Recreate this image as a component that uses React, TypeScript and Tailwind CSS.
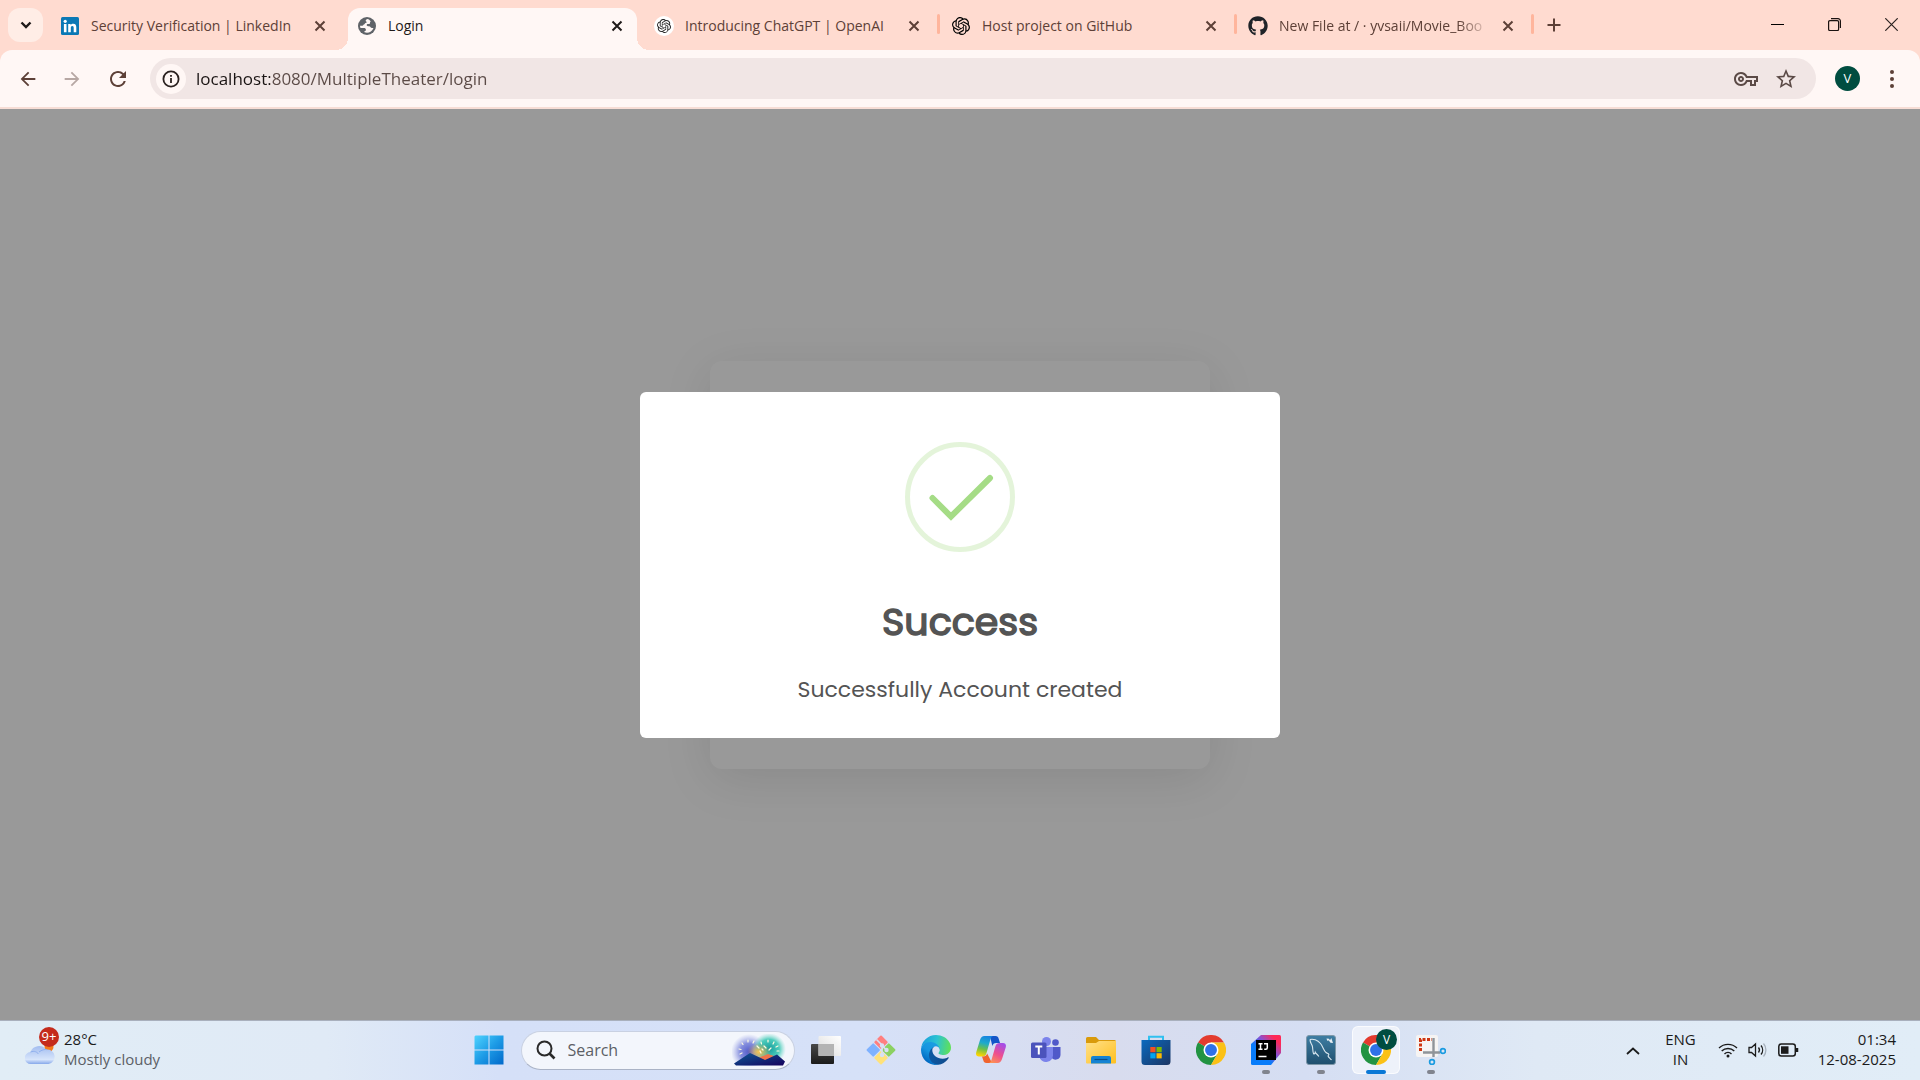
import type { ReactNode } from "react";
import { SiOpenai } from "react-icons/si";
import { FaGithub } from "react-icons/fa";
import { MdArrowBack, MdArrowForward, MdRefresh, MdOutlineVpnKey, MdStarBorder } from "react-icons/md";

/* ---------- Browser icons ---------- */

function LinkedInIcon() {
  return (
    <svg viewBox="0 0 18 18" className="size-[18px]">
      <rect width="18" height="18" rx="1.5" fill="#0a78b5" />
      <circle cx="4.2" cy="4.3" r="1.6" fill="#fff" />
      <path d="M2.9 7h2.6v8.2H2.9zM7.2 7h2.5v1.2c.5-.9 1.4-1.4 2.6-1.4 2.3 0 3 1.5 3 3.7v4.7h-2.6V11c0-1.200-.3-2.100-1.400-2.100-1.100 0-1.500.8-1.500 2.100v4.200H7.200z" fill="#fff" />
    </svg>
  );
}

function GlobeIcon() {
  return (
    <svg viewBox="0 0 18 18" className="size-[18px]">
      <circle cx="9" cy="9" r="9" fill="#5f6368" />
      <path d="M9.500 2c-1.800.7-2.400 1.800-1.300 2.500 1 .6.500 1.400-.6 1.500-1 .1-.6 1.300-1.700 1.400-.9.1-.4 1.200-1.600 1.300l-2.300.1c.1 1 .2 1.500.5 2.200h3.200c1.500 0 2.200.6 2.200 1.700 0 1-.3 1.200-1.400 1.200v1.400c3.500 1.400 7.600-.4 9-4.300h-1.600c-1 0-1.200-.9-2-1.400-1-.5-2.600-.1-3.100-1-.4-.9.2-1.500 1.200-1.500 1-.1 1.500.2 1.900-.6.300-.7-.2-1.500.8-2.100-.9-1.300-2-2-3.200-2.400z" fill="#fff7f5" />
    </svg>
  );
}

function CrossIcon() {
  return (
    <svg viewBox="0 0 12 12" className="size-3" fill="none" stroke="currentColor" strokeWidth="2">
      <path d="M1.500 1.500l9 9M10.500 1.500l-9 9" />
    </svg>
  );
}

type Tab = { title: string; icon: ReactNode; active?: boolean; divider?: boolean; fade?: boolean };

const tabs: Tab[] = [
  { title: "Security Verification | LinkedIn", icon: <LinkedInIcon /> },
  { title: "Login", icon: <GlobeIcon />, active: true },
  {
    title: "Introducing ChatGPT | OpenAI",
    icon: (
      <span className="-m-px grid size-5 shrink-0 place-items-center rounded-full bg-white text-[#222]">
        <SiOpenai className="size-3.5" />
      </span>
    ),
    divider: true,
  },
  { title: "Host project on GitHub", icon: <SiOpenai className="size-[18px] text-black" />, divider: true },
  { title: "New File at / · yvsaii/Movie_Boo", icon: <FaGithub className="-m-px size-5 shrink-0 text-[#1f2328]" />, divider: true, fade: true },
];

function BrowserTab({ tab }: { tab: Tab }) {
  return (
    <div
      className={
        tab.active
          ? "relative flex h-[42px] max-w-[289px] flex-1 items-center rounded-t-xl bg-[#fff7f5] px-2.5 pb-1.5 text-[#1f1a19] before:absolute before:bottom-0 before:-left-3 before:size-3 before:bg-[radial-gradient(circle_at_0_0,transparent_12px,#fff7f5_12px)] after:absolute after:-right-3 after:bottom-0 after:size-3 after:bg-[radial-gradient(circle_at_100%_0,transparent_12px,#fff7f5_12px)]"
          : "relative flex h-[42px] max-w-[289px] flex-1 items-center px-2.5 pb-1.5 text-[#5d4037]"
      }
    >
      <span className="flex w-[18px] shrink-0 justify-center">{tab.icon}</span>
      <a
        href="#"
        className={
          tab.fade
            ? "ml-3 min-w-0 flex-1 overflow-hidden whitespace-nowrap text-sm [mask-image:linear-gradient(90deg,#000_calc(100%-32px),transparent)]"
            : "ml-3 min-w-0 flex-1 overflow-hidden whitespace-nowrap text-sm"
        }
      >
        {tab.title}
      </a>
      <button aria-label={"Close " + tab.title} className="ml-2 grid size-5 place-items-center">
        <CrossIcon />
      </button>
      {tab.divider && <span className="absolute top-1.5 -right-1.5 h-5 w-[3px] rounded-full bg-[#ffb59c]" />}
    </div>
  );
}

function TabStrip() {
  return (
    <div className="flex h-[50px] items-start bg-[#ffdbd0] pt-2 pl-2">
      <button aria-label="Search tabs" className="mr-2 grid h-[34px] w-[35px] shrink-0 place-items-center rounded-xl bg-[#ffede6]">
        <svg viewBox="0 0 12 8" className="w-3" fill="none" stroke="#1f1a19" strokeWidth="2.400">
          <path d="M1.500 1.500L6 6l4.500-4.500" />
        </svg>
      </button>
      <div className="flex min-w-0 flex-1 gap-2">
        {tabs.map((t) => (
          <BrowserTab key={t.title} tab={t} />
        ))}
        <button aria-label="New tab" className="grid h-[34px] w-9 shrink-0 place-items-center">
          <svg viewBox="0 0 14 14" className="size-3.5" stroke="#5d4037" strokeWidth="2">
            <path d="M7 .5v13M.5 7h13" />
          </svg>
        </button>
      </div>
      <div className="flex">
        <button aria-label="Minimize" className="grid h-8 w-[57px] place-items-center">
          <svg viewBox="0 0 13 13" className="size-[13px]" fill="none" stroke="#000">
            <path d="M0 6.500h13" />
          </svg>
        </button>
        <button aria-label="Restore" className="grid h-8 w-[57px] place-items-center">
          <svg viewBox="0 0 13 13" className="size-[13px]" fill="none" stroke="#1a1210" strokeWidth="1.200">
            <rect x=".6" y="2.600" width="10" height="10" rx="1.300" />
            <path d="M3 .6h7a2.400 2.400 0 0 1 2.400 2.400v7" />
          </svg>
        </button>
        <button aria-label="Close window" className="grid h-8 w-[57px] place-items-center">
          <svg viewBox="0 0 13 13" className="size-[13px]" fill="none" stroke="#2b2220" strokeWidth="1.200">
            <path d="M.3.3l12.400 12.400M12.700.3L.3 12.700" />
          </svg>
        </button>
      </div>
    </div>
  );
}

function Toolbar() {
  return (
    <div className="bg-[#ffdbd0]">
      <div className="flex items-center rounded-t-xl border-b-2 border-[#f7ddd5] bg-[#fff7f5] py-2 pl-1.5">
        <button aria-label="Back" className="grid w-11 place-items-center text-[#5d4037]">
          <MdArrowBack className="size-[22px]" />
        </button>
        <button aria-label="Forward" className="grid w-11 place-items-center text-[#b7a7a3]">
          <MdArrowForward className="size-[22px]" />
        </button>
        <button aria-label="Reload" className="grid w-12 place-items-center text-[#5d4037]">
          <MdRefresh className="size-6" />
        </button>
        <div className="ml-2 flex h-[41px] flex-1 items-center rounded-full bg-[#f1e6e5] pr-[18px] pl-1.5">
          <button aria-label="Site information" className="grid size-[30px] place-items-center rounded-full bg-[#fff7f5]">
            <svg viewBox="0 0 18 18" className="size-[18px]" fill="none" stroke="#2b2220" strokeWidth="1.800">
              <circle cx="9" cy="9" r="7.600" />
              <path d="M9 8v5M9 5v1.800" />
            </svg>
          </button>
          <input
            aria-label="Address"
            defaultValue="localhost:8080/MultipleTheater/login"
            className="ml-2.5 min-w-0 flex-1 bg-[linear-gradient(90deg,#1a1413_74px,#5b4a46_74px)] bg-clip-text text-[17px] leading-6 text-transparent caret-black outline-none"
          />
          <button aria-label="Saved passwords" className="text-[#5b4a46]">
            <MdOutlineVpnKey className="size-6" />
          </button>
          <button aria-label="Bookmark this page" className="ml-4 text-[#5b4a46]">
            <MdStarBorder className="size-6" />
          </button>
        </div>
        <button aria-label="Profile" className="ml-[19px] grid size-[25px] place-items-center rounded-full bg-[#004d40] text-[13px] text-white">
          V
        </button>
        <button aria-label="Menu" className="mr-4 ml-[19px] grid h-8 w-[25px] place-items-center">
          <svg viewBox="0 0 4 18" className="h-[18px] w-1" fill="#5d4037">
            <circle cx="2" cy="2" r="2" />
            <circle cx="2" cy="9" r="2" />
            <circle cx="2" cy="16" r="2" />
          </svg>
        </button>
      </div>
    </div>
  );
}

/* ---------- Page ---------- */

function Page() {
  return (
    <main className="relative grid flex-1 place-items-center bg-white">
      <div className="h-[408px] w-full max-w-[500px] rounded-xl bg-white shadow-[0_10px_50px_rgba(0,0,0,0.1)]" />
      <div className="absolute inset-0 grid place-items-center bg-black/40">
        <div
          role="dialog"
          aria-labelledby="dialog-title"
          className="flex w-full max-w-[640px] flex-col items-center rounded-md bg-white pt-[50px] pb-[31px] font-['Poppins','Noto_Sans',sans-serif] text-[#545454]"
        >
          <svg viewBox="0 0 110 110" className="size-[110px]" fill="none" strokeLinecap="round">
            <circle cx="55" cy="55" r="52.500" stroke="#a5dc86" strokeOpacity=".3" strokeWidth="5" />
            <path d="M27.500 56L46 74.500L85 36" stroke="#a5dc86" strokeWidth="6" />
          </svg>
          <h2 id="dialog-title" className="mt-[46px] text-[38px] leading-[48px] font-normal [-webkit-text-stroke:1.500px_#545454]">
            Success
          </h2>
          <p className="mt-[27px] text-[22px] leading-[34px]">Successfully Account created</p>
        </div>
      </div>
    </main>
  );
}

/* ---------- Taskbar icons ---------- */

function WindowsIcon() {
  return (
    <svg viewBox="0 0 30 30" className="size-[30px]">
      <defs>
        <linearGradient id="win" x1="0" y1="0" x2="30" y2="30" gradientUnits="userSpaceOnUse">
          <stop offset="0" stopColor="#50d5ff" />
          <stop offset=".5" stopColor="#1d9be6" />
          <stop offset="1" stopColor="#0067c9" />
        </linearGradient>
      </defs>
      <path d="M1.500.5h13v14H.5v-13zM15.500.5h14v14h-14zM.5 15.500h14v14H.5zM15.500 15.500h14v14h-14z" fill="url(#win)" />
    </svg>
  );
}

function TaskViewIcon() {
  return (
    <svg viewBox="0 0 30 30" className="size-[30px]">
      <defs>
        <linearGradient id="tvd" x1="0" y1="0" x2="0" y2="1">
          <stop offset="0" stopColor="#484848" />
          <stop offset="1" stopColor="#1b1b1b" />
        </linearGradient>
        <linearGradient id="tvl" x1="1" y1="0" x2="0" y2="1">
          <stop offset="0" stopColor="#ffffff" />
          <stop offset="1" stopColor="#dcdcdc" />
        </linearGradient>
      </defs>
      <rect x="0" y="9" width="23" height="20" rx="1" fill="url(#tvd)" />
      <rect x="7.500" y="1" width="22.500" height="20" rx="1" fill="url(#tvl)" />
      <path d="M7.500 9H23v12H7.500z" fill="#b4b4b4" />
    </svg>
  );
}

function GitIcon() {
  return (
    <svg viewBox="0 0 30 30" className="size-[30px]">
      <g transform="rotate(45 15 15)">
        <rect x="4.500" y="4.500" width="10" height="10" rx="1" fill="#ff7f7f" />
        <rect x="15.500" y="4.500" width="10" height="10" rx="1" fill="#8bd162" />
        <rect x="4.500" y="15.500" width="10" height="10" rx="1" fill="#7fb2ff" />
        <rect x="15.500" y="15.500" width="10" height="10" rx="1" fill="#ffe27a" />
      </g>
      <path d="M10.500 4.500L16 10v10M16 10.500l4.500 4.500" stroke="#d8e0f3" strokeWidth="1.600" fill="none" />
      <circle cx="16" cy="10.500" r="2.200" fill="#d8e0f3" />
      <circle cx="20.500" cy="15" r="2.200" fill="#d8e0f3" />
      <circle cx="16" cy="20" r="2.200" fill="#d8e0f3" />
    </svg>
  );
}

function EdgeIcon() {
  return (
    <svg viewBox="0 0 256 256" className="size-[30px]">
      <defs>
        <linearGradient id="edA" x1="64" y1="177" x2="241" y2="177" gradientUnits="userSpaceOnUse">
          <stop offset="0" stopColor="#0c59a4" />
          <stop offset="1" stopColor="#114a8b" />
        </linearGradient>
        <linearGradient id="edB" x1="150" y1="90" x2="45" y2="230" gradientUnits="userSpaceOnUse">
          <stop offset="0" stopColor="#1b9de2" />
          <stop offset=".5" stopColor="#1595df" />
          <stop offset="1" stopColor="#0067c0" />
        </linearGradient>
        <linearGradient id="edC" x1="10" y1="60" x2="250" y2="100" gradientUnits="userSpaceOnUse">
          <stop offset="0" stopColor="#1a9fdc" />
          <stop offset=".5" stopColor="#2cc3d2" />
          <stop offset="1" stopColor="#5fe05a" />
        </linearGradient>
      </defs>
      <path fill="url(#edA)" d="M231 190.500c-3.400 1.800-6.900 3.400-10.500 4.700a101.700 101.700 0 0 1-35.900 6.500c-47.300 0-88.500-32.500-88.500-74.300a31.500 31.500 0 0 1 16.400-27.300c-42.800 1.800-53.800 46.400-53.800 72.500 0 73.900 68.100 81.400 82.800 81.400 7.900 0 19.800-2.300 27-4.600l1.300-.4a128.300 128.300 0 0 0 66.600-52.800 4 4 0 0 0-5.400-5.700z" />
      <path fill="url(#edB)" d="M105.700 241.400a79.200 79.200 0 0 1-22.700-21.300 80.700 80.700 0 0 1 29.500-120c3.100-1.500 8.500-4.100 15.600-4a32.400 32.400 0 0 1 25.700 13 31.900 31.900 0 0 1 6.300 18.700c0-.2 24.500-79.600-80-79.600-43.900 0-80 41.700-80 78.200a130.200 130.200 0 0 0 12.100 56 128 128 0 0 0 156.400 67 75.500 75.500 0 0 1-62.800-8z" />
      <path fill="url(#edC)" d="M152.300 148.900c-.9 1-3.400 2.500-3.400 5.600 0 2.600 1.700 5.200 4.800 7.300 14.300 10 41.400 8.700 41.500 8.700a59.600 59.600 0 0 0 30.300-8.300 61.400 61.400 0 0 0 30.400-52.900c.3-22.400-8-37.300-11.300-43.900C223.500 23.900 177.700 0 128 0A128 128 0 0 0 0 126.200c.5-36.500 36.800-66 80-66 3.500 0 23.500.3 42 10a72.600 72.600 0 0 1 30.900 29.300c6.100 10.600 7.200 24.100 7.200 29.500s-2.700 13.300-7.800 19.900z" />
    </svg>
  );
}

function CopilotIcon() {
  return (
    <svg viewBox="0 0 30 30" className="size-[30px]">
      <defs>
        <linearGradient id="cpA" x1="10" y1="1" x2="5" y2="21" gradientUnits="userSpaceOnUse">
          <stop offset="0" stopColor="#1784e0" />
          <stop offset=".35" stopColor="#1eaacb" />
          <stop offset=".65" stopColor="#6cc04a" />
          <stop offset="1" stopColor="#ffd400" />
        </linearGradient>
        <linearGradient id="cpB" x1="25" y1="8" x2="14" y2="28" gradientUnits="userSpaceOnUse">
          <stop offset="0" stopColor="#a44ee8" />
          <stop offset=".5" stopColor="#ee4f8e" />
          <stop offset="1" stopColor="#ff9a4d" />
        </linearGradient>
      </defs>
      <path d="M14 1h5.500c2 0 2.700 1 3.200 2.800L24 8h-4c-2 0-3 1-3.700 3z" fill="#1455c8" />
      <path d="M8.500 1H17c-1.500.5-2 1.600-2.600 3.500L10.500 18c-.8 2.600-2 3.500-4.200 3.500H3c-2.500 0-3.500-1.800-2.700-4.500L4 5c.9-2.800 2.200-4 4.500-4z" fill="url(#cpA)" />
      <path d="M16 28h-5.500c-2 0-2.700-1-3.200-2.800L6 21.500h1c2.500 0 3.500-1 4.200-3z" fill="#f0642f" />
      <path d="M21.500 28H13c1.500-.5 2-1.600 2.600-3.500L19.500 11c.8-2.200 2-3 4.200-3H27c2.500 0 3.500 1.800 2.700 4.500L26 24c-.9 2.800-2.200 4-4.500 4z" fill="url(#cpB)" />
    </svg>
  );
}

function TeamsIcon() {
  return (
    <svg viewBox="0 0 30 30" className="size-[30px]">
      <circle cx="24.500" cy="7.500" r="3.300" fill="#5059c9" />
      <path d="M21 12h8.500v8a5 5 0 0 1-8.500 3.200z" fill="#5059c9" />
      <circle cx="15.500" cy="6.500" r="4.500" fill="#7b83eb" />
      <path d="M9 12h13v8.500a7 7 0 0 1-13 3z" fill="#7b83eb" />
      <rect x="0" y="7.500" width="15.500" height="15.500" rx="1.500" fill="#4b53bc" />
      <path d="M4.300 11.500h7M7.800 11.500v8" stroke="#fff" strokeWidth="2" />
    </svg>
  );
}

function FolderIcon() {
  return (
    <svg viewBox="0 0 30 30" className="size-[30px]">
      <defs>
        <linearGradient id="fd" x1="0" y1="0" x2="1" y2="1">
          <stop offset="0" stopColor="#ffe08a" />
          <stop offset="1" stopColor="#ffc01e" />
        </linearGradient>
      </defs>
      <path d="M0 3.500A1.500 1.500 0 0 1 1.500 2H10l3 3h15.500A1.500 1.500 0 0 1 30 6.500V12H0z" fill="#d99a0b" />
      <path d="M0 8h10l3-2h17v21.500a1 1 0 0 1-1 1H1a1 1 0 0 1-1-1z" fill="url(#fd)" />
      <path d="M5 28.500V23a2 2 0 0 1 2-2h16a2 2 0 0 1 2 2v5.500z" fill="#1583d3" />
      <path d="M8.500 24.500h13" stroke="#0b4f8a" strokeWidth="1.200" />
    </svg>
  );
}

function StoreIcon() {
  return (
    <svg viewBox="0 0 30 30" className="size-[30px]">
      <defs>
        <linearGradient id="st" x1="0" y1="0" x2="1" y2="1">
          <stop offset="0" stopColor="#0a6abf" />
          <stop offset="1" stopColor="#1c3563" />
        </linearGradient>
      </defs>
      <path d="M8 6V1.800h14V6" fill="none" stroke="#30c0f0" strokeWidth="2" />
      <path d="M.5 5h29v21.500a3.500 3.500 0 0 1-3.500 3.500H4a3.500 3.500 0 0 1-3.500-3.500z" fill="url(#st)" />
      <path d="M9.300 12h5.200v5.200H9.300z" fill="#f25022" />
      <path d="M15.500 12h5.200v5.200h-5.200z" fill="#7fba00" />
      <path d="M9.300 18.200h5.200v5.200H9.300z" fill="#00a4ef" />
      <path d="M15.500 18.200h5.200v5.200h-5.200z" fill="#ffb900" />
    </svg>
  );
}

function ChromeIcon() {
  return (
    <svg viewBox="0 0 48 48" className="size-[30px]">
      <path d="M24 24L3.200 12A24 24 0 0 1 44.800 12H24z" fill="#e33b2e" />
      <path d="M24 24L3.200 12A24 24 0 0 0 24 48L34.400 30z" fill="#229342" />
      <path d="M24 12h20.800A24 24 0 0 1 24 48l10.400-18z" fill="#fbc116" />
      <circle cx="24" cy="24" r="12" fill="#fff" />
      <circle cx="24" cy="24" r="9.500" fill="#2f71e8" />
    </svg>
  );
}

function IntelliJIcon() {
  return (
    <svg viewBox="0 0 30 30" className="size-[30px]">
      <defs>
        <linearGradient id="ij" x1="4" y1="26" x2="28" y2="3" gradientUnits="userSpaceOnUse">
          <stop offset=".3" stopColor="#087cfa" />
          <stop offset=".6" stopColor="#8a4fd0" />
          <stop offset=".9" stopColor="#fe2857" />
        </linearGradient>
      </defs>
      <path d="M10 0h18.500A1.500 1.500 0 0 1 30 1.500V18l-10 12H1.500A1.500 1.500 0 0 1 0 28.500V9z" fill="url(#ij)" />
      <path d="M5 5h20v20H5z" fill="#000" />
      <path d="M7.500 8.800h4M9.500 8.800v5.500M7.500 14.300h4M13 8.800h3.300v4c0 1-.6 1.500-1.500 1.500h-1.600M7.500 21.500h8" stroke="#fff" strokeWidth="1.500" fill="none" />
    </svg>
  );
}

function MySqlIcon() {
  return (
    <svg viewBox="0 0 30 30" className="size-[30px]">
      <defs>
        <linearGradient id="my" x1="0" y1="0" x2="0" y2="1">
          <stop offset="0" stopColor="#3f7ea3" />
          <stop offset="1" stopColor="#1f4f6e" />
        </linearGradient>
      </defs>
      <rect x=".5" y=".5" width="29" height="29" rx="2.500" fill="url(#my)" stroke="#7d97a8" />
      <path d="M4 4.500c3-1 7.500.5 10.500 4 2.500 3 3 7 5.500 9 1 .8 2.300.8 2.800 1.700.5 1-1.200 1-.6 2.200.6 1 2 1.800 3.300 3.600M4 4.500c0 3 1.500 4 2.300 6.500.7 2.300.2 5 1.200 7.500.4 1 1.500.3 1.800-1.300 1 2 2.700 2.600 3.500 4.300" stroke="#dbe8f0" strokeWidth="1.100" fill="none" />
      <path d="M20.500 3.500l2.500.3 1 1.400 1.300-2.200 1.700 5-2.500-.3-1.700-2.200-1.600.2z" fill="#e6eef3" />
    </svg>
  );
}

function SnipIcon() {
  return (
    <svg viewBox="0 0 30 30" className="size-[30px]">
      <rect width="22" height="22" rx="2" fill="#f6f4f3" />
      <path d="M4.500 16V4.500H16" fill="none" stroke="#cf3510" strokeWidth="3" strokeDasharray="3 1.500" />
      <path d="M17.500 3v19M7 17.500h17" stroke="#8f9499" strokeWidth="2.400" />
      <circle cx="27" cy="16" r="2.400" fill="none" stroke="#1a9be0" strokeWidth="1.700" />
      <circle cx="16" cy="27" r="2.400" fill="none" stroke="#1a9be0" strokeWidth="1.700" />
    </svg>
  );
}

function FireworksIcon() {
  return (
    <svg viewBox="0 0 54 32" className="h-8 w-[54px]">
      <defs>
        <radialGradient id="fwA">
          <stop offset="0" stopColor="#4f58c8" />
          <stop offset=".5" stopColor="#6a75d6" stopOpacity=".8" />
          <stop offset="1" stopColor="#9aa2e6" stopOpacity="0" />
        </radialGradient>
        <radialGradient id="fwB">
          <stop offset="0" stopColor="#159a9c" />
          <stop offset=".6" stopColor="#2fc4b0" stopOpacity=".85" />
          <stop offset="1" stopColor="#7ddccb" stopOpacity="0" />
        </radialGradient>
        <radialGradient id="fwC">
          <stop offset="0" stopColor="#ffc44d" />
          <stop offset="1" stopColor="#e0a34d" stopOpacity="0" />
        </radialGradient>
        <linearGradient id="fwD" x1="0" y1="0" x2="1" y2="1">
          <stop offset="0" stopColor="#0d5a96" />
          <stop offset="1" stopColor="#16005c" />
        </linearGradient>
      </defs>
      <ellipse cx="17" cy="18" rx="18" ry="18" fill="url(#fwA)" />
      <ellipse cx="37" cy="15" rx="17" ry="16" fill="url(#fwB)" />
      <ellipse cx="27" cy="18" rx="12" ry="9" fill="url(#fwC)" />
      <path d="M26 24l8 4 8-6-6-2z" fill="#f0734a" />
      <path d="M2 29.500L18 19l15 7 12-5.500 8 7-2 4H4z" fill="url(#fwD)" />
      <path d="M16 6v2M10 9l1 1.500M22 7l-1 2M7 15l2 .5M25 12l2 2M29 8l.5 2M36 6v2M42 8l-1 2M46 12l-2 1M47 17h-2M32 12l2 2M39 14l-2 2M28 17l1 2M8 20l2-1M30 15l1 1" stroke="#fffbe0" strokeWidth="1.200" strokeLinecap="round" />
    </svg>
  );
}

function WeatherIcon() {
  return (
    <span className="relative block h-10 w-[30px]">
      <svg viewBox="0 0 30 40" className="h-10 w-[30px]">
        <defs>
          <linearGradient id="cl" x1="0" y1="0" x2="0" y2="1">
            <stop offset="0" stopColor="#a3bdf0" />
            <stop offset=".75" stopColor="#d7e5fb" />
            <stop offset="1" stopColor="#86a8ea" />
          </linearGradient>
        </defs>
        <circle cx="24" cy="18" r="4.500" fill="#f57a1c" />
        <path d="M6 35a6 6 0 0 1-.5-12A9 9 0 0 1 21 20.500 7.300 7.300 0 0 1 23.500 35z" fill="url(#cl)" />
        <path d="M5.500 23c4-1.500 6.500 0 8 2M14 23c2.500-2 6-3 8-2.400" stroke="#8fb0ee" fill="none" />
      </svg>
      <span className="absolute -top-0.5 left-3.5 grid size-5 place-items-center rounded-full bg-[#c42b1c] text-[13px] leading-none text-white">9+</span>
    </span>
  );
}

/* ---------- Taskbar ---------- */

type AppEntry = { name: string; icon: ReactNode; running?: boolean; active?: boolean };

const apps: AppEntry[] = [
  { name: "Task view", icon: <TaskViewIcon /> },
  { name: "Git", icon: <GitIcon /> },
  { name: "Edge", icon: <EdgeIcon /> },
  { name: "Copilot", icon: <CopilotIcon /> },
  { name: "Teams", icon: <TeamsIcon /> },
  { name: "File Explorer", icon: <FolderIcon /> },
  { name: "Microsoft Store", icon: <StoreIcon /> },
  { name: "Chrome", icon: <ChromeIcon /> },
  { name: "IntelliJ IDEA", icon: <IntelliJIcon />, running: true },
  { name: "MySQL Workbench", icon: <MySqlIcon />, running: true },
  { name: "Chrome, profile V", icon: <ChromeIcon />, active: true },
  { name: "Snipping Tool", icon: <SnipIcon />, running: true },
];

function Taskbar() {
  return (
    <footer className="grid h-[60px] grid-cols-[1fr_auto_1fr] items-center border-t border-[#a9b0bd] bg-[linear-gradient(90deg,#e1edf6_0%,#e0eaf6_17%,#d5e0f8_26%,#d6e1f8_45%,#d8dcee_58%,#d5def3_68%,#dfe9f5_80%,#e1edf7_100%)]">
      <button className="flex items-center justify-self-start pb-1 pl-[25px] text-left text-[15px] leading-5">
        <WeatherIcon />
        <span className="ml-[9px]">
          <span className="block text-[#1b1b1b]">28°C</span>
          <span className="block text-[#5c6066]">Mostly cloudy</span>
        </span>
      </button>

      <div className="flex items-center pb-px">
        <button aria-label="Start" className="grid w-[55px] place-items-center">
          <WindowsIcon />
        </button>
        <label className="mx-1 flex h-[39px] w-[274px] items-center rounded-full border border-[#c9d1e2] border-b-[#aab3c6] bg-[#f3f6fc] pr-2 pl-3.5">
          <svg viewBox="0 0 20 20" className="size-5" fill="none" stroke="#2a2a2a" strokeWidth="2">
            <circle cx="8.500" cy="8.500" r="7" />
            <path d="M13.500 13.500l5 5" strokeWidth="2.600" />
          </svg>
          <input type="search" aria-label="Search" placeholder="Search" className="ml-3 min-w-0 flex-1 text-base leading-6 text-[#1b1b1b] outline-none placeholder:text-[#5c5f66]" />
          <FireworksIcon />
        </label>
        {apps.map((a) => (
          <button key={a.name} aria-label={a.name} className="grid w-[55px] place-items-center">
            <span
              className={
                a.active
                  ? "relative grid size-12 place-items-center rounded-md border border-white/70 bg-white/55"
                  : "relative grid size-12 place-items-center"
              }
            >
              {a.icon}
              {a.running && <span className="absolute bottom-0 left-5 h-1 w-2 rounded-full bg-[#80848e]" />}
              {a.active && <span className="absolute -bottom-px h-1 w-5 rounded-full bg-[#0a78d6]" />}
              {a.active && (
                <span className="absolute top-0.5 right-0.5 grid size-[21px] place-items-center rounded-full bg-[#004d40] text-xs text-white">V</span>
              )}
            </span>
          </button>
        ))}
      </div>

      <div className="flex items-center justify-self-end pr-6 text-[15px] leading-5 text-[#1b1b1b]">
        <button aria-label="Show hidden icons">
          <svg viewBox="0 0 14 8" className="w-3.5" fill="none" stroke="currentColor" strokeWidth="1.800">
            <path d="M1 7l6-5.500L13 7" />
          </svg>
        </button>
        <button className="ml-[25px] pb-1 text-center">
          <span className="block">ENG</span>
          <span className="block">IN</span>
        </button>
        <button aria-label="Network, sound and battery" className="ml-[22px] flex items-center gap-2.5 pb-0.5">
          <svg viewBox="0 0 20 16" className="h-4 w-5" fill="none" stroke="currentColor" strokeWidth="1.400">
            <path d="M1 6a13 13 0 0 1 18 0M3.700 9a9 9 0 0 1 12.600 0M6.500 12a5 5 0 0 1 7 0" />
            <circle cx="10" cy="14" r="1.500" fill="currentColor" stroke="none" />
          </svg>
          <svg viewBox="0 0 20 16" className="h-4 w-5" fill="none" stroke="currentColor" strokeWidth="1.300">
            <path d="M1 5.500h2.500L7.500 2v12l-4-3.500H1zM10.500 5.500a4 4 0 0 1 0 5M13 3.500a7 7 0 0 1 0 9" />
            <path d="M15.500 1.500a10 10 0 0 1 0 13" stroke="#a9b2bd" />
          </svg>
          <svg viewBox="0 0 21 14" className="h-3.5 w-[21px]" fill="none" stroke="currentColor" strokeWidth="1.500">
            <rect x=".8" y="1" width="16.500" height="12" rx="2.500" />
            <rect x="3" y="3.300" width="7.500" height="7.500" fill="currentColor" stroke="none" />
            <path d="M19 5v4" strokeWidth="2.500" />
          </svg>
        </button>
        <button className="ml-[19px] pb-1 text-right">
          <span className="block">01:34</span>
          <span className="block">12-08-2025</span>
        </button>
      </div>
    </footer>
  );
}

export default function App() {
  return (
    <div className="flex min-h-screen flex-col font-['Open_Sans','Noto_Sans',sans-serif]">
      <header>
        <TabStrip />
        <Toolbar />
      </header>
      <Page />
      <Taskbar />
    </div>
  );
}
